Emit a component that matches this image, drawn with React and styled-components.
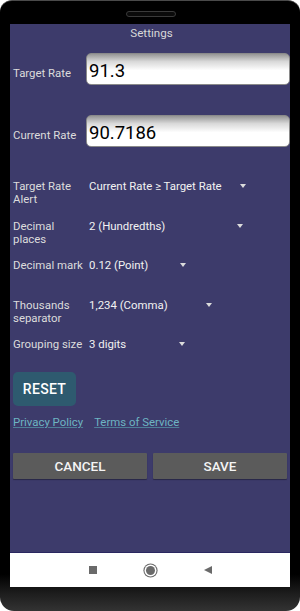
import React from 'react'
import styled, { createGlobalStyle } from 'styled-components'

const GlobalStyle = createGlobalStyle`
  html, body {
    margin: 0;
    padding: 0;
    background: #fff;
  }
  body {
    font-family: Roboto, 'Noto Sans', sans-serif;
  }
`

const spinners = [
  { label: 'Target Rate Alert', value: 'Current Rate ≥ Target Rate', width: 157 },
  { label: 'Decimal places', value: '2 (Hundredths)', width: 154 },
  { label: 'Decimal mark', value: '0.12 (Point)', width: 97 },
  { label: 'Thousands separator', value: '1,234 (Comma)', width: 123 },
  { label: 'Grouping size', value: '3 digits', width: 96 },
]

function App() {
  return (
    <>
      <GlobalStyle />
      <Phone>
        <Speaker />
        <Screen>
          <Content>
            <Title>Settings</Title>
            <InputRow $top={11}>
              <Label $shift={8}>Target Rate</Label>
              <RateInput defaultValue='91.3' readOnly />
            </InputRow>
            <InputRow $top={30}>
              <Label $shift={8}>Current Rate</Label>
              <RateInput defaultValue='90.7186' readOnly />
            </InputRow>
            <Spinners>
              {spinners.map((s, i) => (
                <SpinnerRow key={s.label} $last={i === spinners.length - 1}>
                  <Label>{s.label}</Label>
                  <Select style={{ width: s.width }}>
                    <span>{s.value}</span>
                    <Caret />
                  </Select>
                </SpinnerRow>
              ))}
            </Spinners>
            <ResetButton>RESET</ResetButton>
            <Links>
              <LinkText href='#'>Privacy Policy</LinkText>
              <LinkText href='#'>Terms of Service</LinkText>
            </Links>
            <Actions>
              <ActionButton>CANCEL</ActionButton>
              <ActionButton>SAVE</ActionButton>
            </Actions>
          </Content>
          <NavBar>
            <NavSquare />
            <NavHome />
            <NavBack />
          </NavBar>
        </Screen>
      </Phone>
    </>
  )
}

export default App

const Phone = styled.div`
  position: relative;
  width: 300px;
  height: 611px;
  box-sizing: border-box;
  padding: 24px 10px 24px 10px;
  background: linear-gradient(to bottom, #000 0, #000 94%, #1c1c1c 97%, #333 100%);
  border-top: 1px solid #4a4a4a;
  border-radius: 12px 12px 14px 14px;
  display: flex;
  flex-direction: column;
  overflow: hidden;
`
const Speaker = styled.div`
  position: absolute;
  top: 10px;
  left: 126px;
  width: 48px;
  height: 4px;
  border: 1px solid #3a3a3a;
  border-radius: 4px;
  background: #0a0a0a;
`
const Screen = styled.div`
  flex: 1;
  margin-top: -1px;
  display: flex;
  flex-direction: column;
  background: #3d3b6b;
`
const Content = styled.div`
  flex: 1;
  display: flex;
  flex-direction: column;
  padding: 0 0 0 3px;
  color: #dcdcdc;
  font-size: 11.4px;
`
const Title = styled.div`
  height: 18px;
  line-height: 18px;
  text-align: center;
  color: #d8d8d8;
  font-size: 11.6px;
`
const InputRow = styled.div`
  display: flex;
  align-items: center;
  margin-top: ${p => p.$top}px;
  height: 32px;
`
const Label = styled.div`
  flex: 0 0 73px;
  width: 73px;
  line-height: 13px;
  color: #dcdcdc;
  padding-top: ${p => p.$shift || 0}px;
`
const RateInput = styled.input`
  flex: 1;
  min-width: 0;
  height: 32px;
  box-sizing: border-box;
  border: 1px solid #8a8a8a;
  border-radius: 5px;
  background: linear-gradient(to bottom, #959595 0, #d8d8d8 25%, #fff 55%, #fff 100%);
  padding: 3px 0 0 2px;
  font-family: Roboto, sans-serif;
  font-size: 18.5px;
  color: #000;
  outline: none;
`
const Spinners = styled.div`
  margin-top: 33px;
  display: flex;
  flex-direction: column;
`
const SpinnerRow = styled.div`
  display: flex;
  align-items: flex-start;
  height: ${p => (p.$last ? 'auto' : '39.5px')};
`
const Select = styled.div`
  margin-left: 3px;
  display: flex;
  justify-content: space-between;
  align-items: flex-start;
  line-height: 13px;
  color: #f2f2f2;
  white-space: nowrap;
`
const Caret = styled.i`
  margin-top: 4px;
  width: 0;
  height: 0;
  border-left: 3.5px solid transparent;
  border-right: 3.5px solid transparent;
  border-top: 4px solid #dcdcdc;
`
const ResetButton = styled.button`
  margin-top: 21px;
  align-self: flex-start;
  width: 63px;
  height: 34px;
  border: none;
  border-radius: 5px;
  background: #2e5a6f;
  color: #fff;
  font-family: Roboto, sans-serif;
  font-size: 14px;
  font-weight: 500;
  letter-spacing: 0.3px;
  padding: 0;
`
const Links = styled.div`
  margin-top: 9px;
  display: flex;
  gap: 11px;
  line-height: 14px;
`
const LinkText = styled.a`
  color: #6db5c2;
  font-size: 11.4px;
  text-decoration: underline;
  text-decoration-color: #4f7f99;
`
const Actions = styled.div`
  margin-top: 24px;
  padding-right: 3px;
  display: grid;
  grid-template-columns: 1fr 1fr;
  gap: 6px;
`
const ActionButton = styled.button`
  height: 26px;
  border: none;
  border-radius: 1px;
  background: #5b5b5b;
  box-shadow: 0 1px 1px rgba(0, 0, 0, 0.35);
  color: #f4f4f4;
  font-family: Roboto, sans-serif;
  font-size: 13.5px;
  font-weight: 500;
  padding: 0;
`
const NavBar = styled.div`
  height: 34px;
  background: #fff;
  border-top: 1px solid #2a2760;
  display: flex;
  align-items: center;
  justify-content: center;
`
const NavSquare = styled.span`
  width: 8px;
  height: 8px;
  background: #6a6a6a;
  margin-right: 49.5px;
`
const NavHome = styled.span`
  width: 9px;
  height: 9px;
  border-radius: 50%;
  background: #6a6a6a;
  box-shadow: 0 0 0 1.5px #fff, 0 0 0 2.6px #6a6a6a;
`
const NavBack = styled.span`
  width: 0;
  height: 0;
  margin-left: 48.5px;
  border-top: 4.5px solid transparent;
  border-bottom: 4.5px solid transparent;
  border-right: 8px solid #6a6a6a;
`
